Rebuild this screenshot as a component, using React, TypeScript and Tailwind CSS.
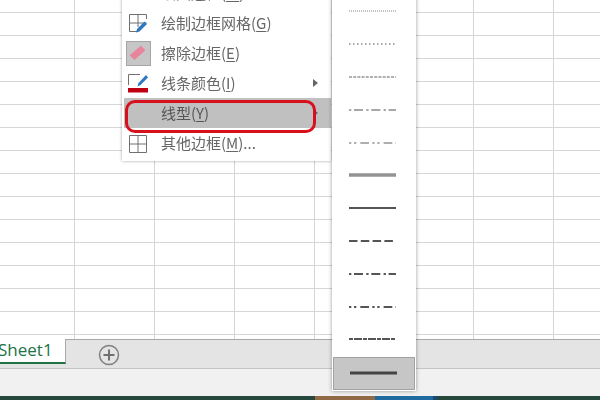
const cols = [75, 80, 80, 80, 79, 80, 80, 80];
const rows = Array.from({ length: 15 }, (_, i) => (i === 0 ? 13 : 23));

const lineStyles = [
  { y: 1, w: 1, color: "#808080", dash: "1 1" },
  { y: 1, w: 1, color: "#505050", dash: "1.5 2.5" },
  { y: 1, w: 1, color: "#606060", dash: "3 1.2" },
  { y: 1, w: 1.2, color: "#505050", dash: "2.3 2.7 9 3.3" },
  { y: 1, w: 1.2, color: "#606060", dash: "2.3 2.7 2.3 4 8.7 3.3" },
  { y: 3, w: 3.5, color: "#939393", dash: "" },
  { y: 2, w: 2, color: "#555555", dash: "" },
  { y: 2, w: 2, color: "#555555", dash: "8.5 3.3" },
  { y: 2, w: 2, color: "#555555", dash: "2.3 2.7 9 3.3" },
  { y: 2, w: 2, color: "#555555", dash: "2.3 2.7 2.3 4 8.7 3.3" },
  { y: 2, w: 2, color: "#555555", dash: "4 1 8 1" },
];

function Underlined({ label, hot, tail }: { label: string; hot: string; tail?: string }) {
  return (
    <span>
      {label}(<span className="underline underline-offset-2">{hot}</span>){tail}
    </span>
  );
}

function MenuItem({
  icon,
  label,
  hot,
  tail,
  arrow,
  active,
}: {
  icon?: React.ReactNode;
  label: string;
  hot: string;
  tail?: string;
  arrow?: boolean;
  active?: boolean;
}) {
  return (
    <div className={`flex items-center h-[30px] pl-[2px] ml-[2px] ${active ? "bg-[#c0c0c0] text-[#555]" : ""}`}>
      <div className="w-[25px] h-[25px] mr-[10px] shrink-0">{icon}</div>
      <Underlined label={label} hot={hot} tail={tail} />
      {arrow ? (
        <span className="ml-auto mr-[13px] w-0 h-0 border-y-[4px] border-y-transparent border-l-[5px] border-l-[#666]" />
      ) : null}
    </div>
  );
}

function GridPenIcon() {
  return (
    <svg width="25" height="25" viewBox="0 0 25 25" fill="none">
      <path d="M3.5 3.5H20.5M3.5 3.5V20.5H12M3.5 12H20.5M12 3.5V16M20.5 3.5V8" stroke="#707070" />
      <path d="M10 21.5L11 18L18.5 10.5L21 13L13.5 20.5Z" fill="#2f78c0" />
    </svg>
  );
}

function EraserIcon() {
  return (
    <svg width="25" height="25" viewBox="0 0 25 25" fill="none" className="bg-[#c6c6c6] border border-[#a6a6a6]">
      <path d="M3 14.5L15 4L20 9L8 19.5Z" fill="#e8849c" />
    </svg>
  );
}

function LineColorIcon() {
  return (
    <svg width="25" height="25" viewBox="0 0 25 25" fill="none">
      <path d="M2.5 14V3.5H14" stroke="#707070" />
      <path d="M11.5 15.5L12.5 12L20 4L22 6.5L14.5 14Z" fill="#2f78c0" />
      <rect x="2" y="17" width="20" height="4.5" fill="#c00010" />
    </svg>
  );
}

function GridIcon() {
  return (
    <svg width="25" height="25" viewBox="0 0 25 25" fill="none">
      <path d="M3.5 4.5H20.5V21.5H3.5ZM3.5 13H20.5M12 4.5V21.5" stroke="#707070" />
    </svg>
  );
}

export default function App() {
  return (
    <div className="relative w-[600px] h-[400px] overflow-hidden flex flex-col bg-white font-['Noto_Sans_CJK_SC','Noto_Sans',sans-serif]">
      <div className="h-[339px] shrink-0 overflow-hidden">
        {rows.map((h, r) => (
          <div key={r} className="flex border-b border-[#d6d6d6]" style={{ height: h }}>
            {cols.map((w, c) => (
              <div key={c} className="border-r border-[#d6d6d6] shrink-0" style={{ width: w }} />
            ))}
          </div>
        ))}
        <div className="flex h-[6px]">
          {cols.map((w, c) => (
            <div key={c} className="border-r border-[#d6d6d6] shrink-0" style={{ width: w }} />
          ))}
        </div>
      </div>

      <div className="flex h-[30px] shrink-0 bg-[#e4e4e4] border-b border-[#c4c4c4]">
        <div className="w-[66px] h-[25px] shrink-0 bg-white border-b-2 border-r border-b-[#217346] border-r-[#a8a8a8] overflow-hidden">
          <span className="block -ml-[2px] text-[17px] leading-[21px] text-[#217346] font-['Open_Sans',sans-serif]">Sheet1</span>
        </div>
        <div className="flex-1 flex border-t border-[#a8a8a8] pl-[32px] pt-[4px]">
          <svg width="22" height="22" viewBox="0 0 22 22" fill="none">
            <circle cx="11" cy="11" r="9.5" stroke="#808080" strokeWidth="1.5" />
            <path d="M11 5.5V16.5M5.5 11H16.5" stroke="#707070" strokeWidth="2" />
          </svg>
        </div>
      </div>

      <div className="h-[27px] shrink-0 bg-[#f1f1f1]" />

      <div className="flex flex-1 bg-[#26483c]">
        <div className="w-[315px]" />
        <div className="w-[60px] bg-[#8f6a45]" />
        <div className="w-[58px] bg-[#1f6a9e]" />
        <div className="w-[5px] bg-[#1d4a6a]" />
      </div>

      <div className="absolute left-[122px] top-[-22px] w-[209px] bg-white pb-[3px] text-[15px] text-[#666] blur-[0.3px] shadow-[0_0_3px_rgba(0,0,0,0.35)]">
        <MenuItem label="绘图边框" hot="W" />
        <MenuItem icon={<GridPenIcon />} label="绘制边框网格" hot="G" />
        <MenuItem icon={<EraserIcon />} label="擦除边框" hot="E" />
        <MenuItem icon={<LineColorIcon />} label="线条颜色" hot="I" arrow />
        <MenuItem icon={null} label="线型" hot="Y" arrow active />
        <MenuItem icon={<GridIcon />} label="其他边框" hot="M" tail="..." />
      </div>

      <div className="absolute left-[125px] top-[100px] w-[191px] h-[33px] rounded-[10px] border-[3px] border-[#d8101c]" />

      <div className="absolute left-[332px] top-[-5px] w-[84px] h-[396px] bg-white flex flex-col shadow-[0_0_4px_rgba(0,0,0,0.4)]">
        {lineStyles.map((s, i) => (
          <div key={i} className="h-[32.8px] shrink-0 flex items-center pl-[17px]">
            <svg width="47" height={s.y * 2} viewBox={`0 0 47 ${s.y * 2}`}>
              <line x1="0" x2="47" y1={s.y} y2={s.y} stroke={s.color} strokeWidth={s.w} strokeDasharray={s.dash} />
            </svg>
          </div>
        ))}
        <div className="h-[33px] mx-[1px] mt-[1px] shrink-0 flex items-center pl-[16px] bg-[#c6c6c6] border border-[#a2a2a2]">
          <svg width="47" height="4" viewBox="0 0 47 4">
            <line x1="0" x2="47" y1="2" y2="2" stroke="#444444" strokeWidth="3" />
          </svg>
        </div>
      </div>
    </div>
  );
}
